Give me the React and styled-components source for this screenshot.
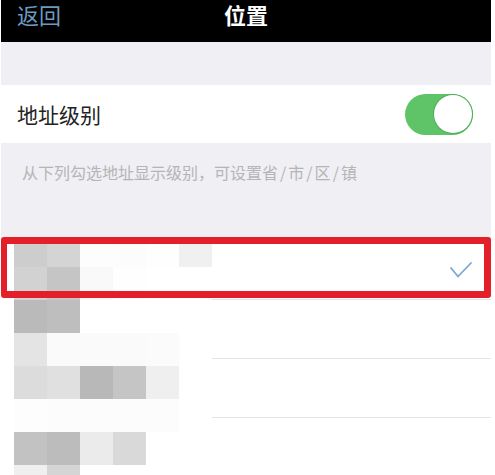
import React from 'react'
import styled, { createGlobalStyle } from 'styled-components'

const GlobalStyle = createGlobalStyle`
  html, body {
    margin: 0;
    padding: 0;
    background: #fff;
  }
  body {
    font-family: "Noto Sans CJK SC", "Noto Sans", sans-serif;
  }
`

// mosaic shades, 6 columns per row
const mosaic = [
  ['#cdcdcd', '#d4d4d4', '#fdfdfd', '#fcfcfc', '#fefefe', '#f0f0f0'],
  ['#d2d2d2', '#c5c5c5', '#f9f9f9', '#fefefe', '#fff', '#fff'],
  ['#bababa', '#bebebe', '#fff', '#fff', '#fff', '#fff'],
  ['#e4e4e4', '#fafafa', '#fafafa', '#fafafa', '#fbfbfb', '#fff'],
  ['#dcdcdc', '#e0e0e0', '#b8b8b8', '#c5c5c5', '#efefef', '#fff'],
  ['#fdfdfd', '#fcfcfc', '#fcfcfc', '#fcfcfc', '#fcfcfc', '#fff'],
  ['#c2c2c2', '#bcbcbc', '#ebebeb', '#d9d9d9', '#fff', '#fff'],
  ['#efefef', '#d5d5d5', '#fff', '#fff', '#fff', '#fff'],
]

const levels = ['省', '市', '区', '镇']

const rows = [{ checked: true }, {}, {}, {}]

const App = () => {
  return (
    <Page>
      <GlobalStyle />
      <Header>
        <Back>返回</Back>
        <Title>位置</Title>
      </Header>
      <Spacer />
      <SwitchRow>
        <Label>地址级别</Label>
        <Toggle>
          <Knob />
        </Toggle>
      </SwitchRow>
      <Footer>
        从下列勾选地址显示级别，可设置
        {levels.map((l, i) => (
          <React.Fragment key={l}>
            {i > 0 && <Slash>/</Slash>}
            {l}
          </React.Fragment>
        ))}
      </Footer>
      <List>
        {rows.map((row, i) => (
          <Row key={i} $last={i === rows.length - 1}>
            {row.checked && (
              <Check viewBox='0 0 22 16'>
                <polyline points='1,6 8,14.5 21,1' />
              </Check>
            )}
          </Row>
        ))}
        <Mosaic>
          {mosaic.flat().map((c, i) => (
            <Cell key={i} $c={c} />
          ))}
        </Mosaic>
        <Highlight />
      </List>
    </Page>
  )
}

const Page = styled.div`
  width: 490px;
  margin-left: 1px;
  background: #efeff4;
  overflow: hidden;
  height: 475px;
`

const Header = styled.div`
  position: relative;
  height: 42px;
  background: #000;
  display: flex;
  align-items: flex-start;
  justify-content: center;
  padding-top: 2px;
  box-sizing: border-box;
`

const Back = styled.span`
  position: absolute;
  left: 16px;
  top: 2px;
  font-size: 22px;
  line-height: 24px;
  color: #6b9bc0;
`

const Title = styled.span`
  font-size: 22px;
  line-height: 24px;
  font-weight: 700;
  color: #fff;
`

const Spacer = styled.div`
  height: 43px;
`

const SwitchRow = styled.div`
  height: 58px;
  background: #fff;
  display: flex;
  align-items: center;
  justify-content: space-between;
  padding: 0 18px 0 16px;
`

const Label = styled.span`
  font-size: 21px;
  color: #222;
`

const Toggle = styled.div`
  width: 68px;
  height: 41px;
  border-radius: 21px;
  background: #5fc468;
  display: flex;
  align-items: center;
  justify-content: flex-end;
  padding: 0 1px;
  box-sizing: border-box;
`

const Knob = styled.div`
  width: 38px;
  height: 38px;
  border-radius: 50%;
  background: #fff;
  box-shadow: 0 0 0 1px #4fae58;
`

const Footer = styled.div`
  height: 98px;
  box-sizing: border-box;
  padding: 18px 0 0 21px;
  font-size: 16px;
  line-height: 23px;
  color: #b5b5b5;
`

const Slash = styled.span`
  margin: 0 2px;
`

const List = styled.div`
  position: relative;
  background: #fff;
`

const Row = styled.div`
  height: 59px;
  display: flex;
  align-items: center;
  justify-content: flex-end;
  padding-right: 19px;
  border-bottom: ${(p) => (p.$last ? 'none' : '1px solid #e4e4e4')};
  margin-left: 14px;
  box-sizing: border-box;
`

const Check = styled.svg`
  width: 22px;
  height: 16px;
  fill: none;
  stroke: #7aa8d4;
  stroke-width: 1.8;
  stroke-linecap: round;
  stroke-linejoin: round;
`

const Mosaic = styled.div`
  position: absolute;
  left: 13px;
  top: -4px;
  display: grid;
  grid-template-columns: repeat(6, 33px);
  grid-template-rows: 30px;
  grid-auto-rows: 33px;
`

const Cell = styled.div`
  background: ${(p) => p.$c};
`

const Highlight = styled.div`
  position: absolute;
  left: 0;
  top: -4px;
  width: 490px;
  height: 61px;
  box-sizing: border-box;
  border: 7px solid #e3202a;
  border-left-width: 6px;
  border-radius: 3px;
`

export default App
